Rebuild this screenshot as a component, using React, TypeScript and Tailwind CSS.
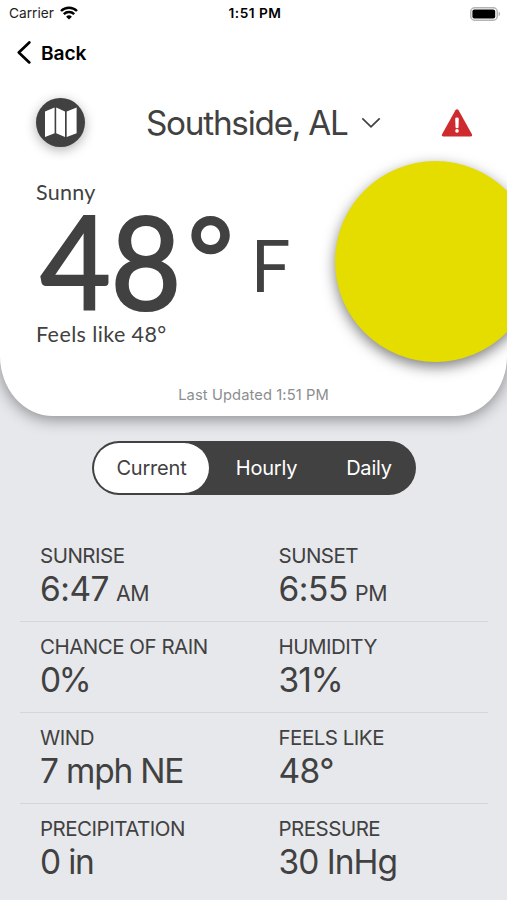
import { useState } from "react";
import type { ReactNode } from "react";

type Stat = {
  label: string;
  value: string;
  unit?: string;
  tracking: string;
};

const STATS: [Stat, Stat][] = [
  [
    { label: "SUNRISE", value: "6:47", unit: "AM", tracking: "tracking-[-0.5px]" },
    { label: "SUNSET", value: "6:55", unit: "PM", tracking: "tracking-[-0.4px]" },
  ],
  [
    { label: "CHANCE OF RAIN", value: "0%", tracking: "tracking-[-2.5px]" },
    { label: "HUMIDITY", value: "31%", tracking: "tracking-[-1px]" },
  ],
  [
    { label: "WIND", value: "7 mph NE", tracking: "tracking-[-1.2px]" },
    { label: "FEELS LIKE", value: "48°", tracking: "tracking-[-0.6px]" },
  ],
  [
    { label: "PRECIPITATION", value: "0 in", tracking: "tracking-[-1.2px]" },
    { label: "PRESSURE", value: "30 InHg", tracking: "tracking-[-1px]" },
  ],
];

const TABS = ["Current", "Hourly", "Daily"];

export default function App() {
  const [tab, setTab] = useState("Current");

  return (
    <main className="h-[900px] w-[507px] overflow-hidden bg-[#e7e8ec] font-['Inter',sans-serif] text-[#414141]">
      <section className="relative h-[416px]">
        <div className="h-full rounded-b-[53px_60px] bg-white px-px shadow-[0_3px_16px_rgba(0,0,0,0.42)]">
          <StatusBar />
          <BackButton />
          <LocationRow />
          <Temperature />
          <p className="mt-[39px] text-center text-[14.7px] leading-5 tracking-[0.1px] text-[#8b8d90]">
            Last Updated 1:51 PM
          </p>
        </div>
        {/* sun runs off the right edge */}
        <div className="absolute left-[335px] top-[161px] h-[201px] w-[201px] rounded-full bg-[#e5dc00] shadow-[0_5px_14px_rgba(0,0,0,0.5)]" />
      </section>

      <nav className="ml-[92px] mt-[25px] flex h-[54px] w-[324px] items-center rounded-full bg-[#414141] p-[2px]">
        {TABS.map((name) => (
          <TabButton key={name} active={tab === name} onClick={() => setTab(name)}>
            {name}
          </TabButton>
        ))}
      </nav>

      <div className="ml-5 mr-[19px] mt-[36px]">
        {STATS.map(([left, right]) => (
          <div
            key={left.label}
            className="grid h-[91px] grid-cols-[238.5px_1fr] border-b border-[#d5d6da] pl-5 last:border-b-0"
          >
            <StatCell {...left} />
            <StatCell {...right} />
          </div>
        ))}
      </div>
    </main>
  );
}

function StatusBar() {
  return (
    <div className="grid h-[27px] grid-cols-3 items-center pl-[8px] pr-[5px] text-[13.7px] text-[#222]">
      <div className="flex items-center gap-[6px]">
        <span>Carrier</span>
        <svg width="18" height="14" viewBox="0 0 18 14" fill="none" stroke="#000" strokeWidth="2.4">
          <path d="M1 5a11.4 11.4 0 0 1 16 0" />
          <path d="M3.8 8.1a7.4 7.4 0 0 1 10.4 0" />
          <path d="M9 13.6 6.1 10.7a4.1 4.1 0 0 1 5.8 0z" fill="#000" stroke="none" />
        </svg>
      </div>
      <span className="text-center font-semibold tracking-[0.5px] text-black">1:51 PM</span>
      <svg className="justify-self-end" width="31" height="14" viewBox="0 0 31 14">
        <rect x="0.75" y="0.75" width="26.5" height="12.5" rx="4" fill="none" stroke="#b4b4b4" strokeWidth="1.5" />
        <rect x="2.4" y="2.4" width="22.8" height="9.2" rx="2" fill="#000" />
        <path d="M28.6 4.8c2 .6 2 3.8 0 4.4z" fill="#b4b4b4" />
      </svg>
    </div>
  );
}

function BackButton() {
  return (
    <button className="flex h-[52px] items-center pl-[16px] text-black">
      <svg className="-mt-[2px]" width="14" height="23" viewBox="0 0 14 23" fill="none" stroke="#000" strokeWidth="2.7" strokeLinecap="round" strokeLinejoin="round">
        <path d="M12.3 1.4 1.8 11.4l10.5 10" />
      </svg>
      <span className="ml-[10px] text-[19.2px] font-semibold tracking-[-0.1px]">Back</span>
    </button>
  );
}

function LocationRow() {
  return (
    <div className="flex h-[88px] items-center pl-[35px]">
      <button className="-mt-px flex h-[49px] w-[49px] items-center justify-center rounded-full bg-[#414141] shadow-[0_3px_12px_rgba(0,0,0,0.3)]">
        <svg width="32" height="31" viewBox="0 0 32 31" fill="#fff">
          <path d="M0 4.4 9.6.6v25.6L0 30z" />
          <path d="m11.2.6 8.8 3.8V30l-8.8-3.8z" />
          <path d="M21.7 4.4 31.6.6v25.6L21.7 30z" />
        </svg>
      </button>
      <button className="ml-[61px] flex items-center">
        <span className="-mt-px whitespace-nowrap text-[33.3px] leading-10 tracking-[-1.25px]">Southside, AL</span>
        <svg className="ml-[14px]" width="20" height="12" viewBox="0 0 20 12" fill="none" stroke="#414141" strokeWidth="1.8">
          <path d="m.3 1.4 8.7 8.4 8.7-8.4" />
        </svg>
      </button>
      <svg className="ml-auto mr-[33px] -mt-px" width="32" height="28" viewBox="0 0 32 28">
        <path d="M14.4 1.3q1.6-2 3.2 0l13.2 23.8q.9 2.3-1.4 2.4H2.6Q.3 27.4 1.2 25.1z" fill="#cf2a2d" />
        <path d="M14.2 9.8q0-1.2 1.8-1.2t1.8 1.2l-.3 8.4q-.1 1-1.5 1t-1.5-1z" fill="#fff" />
        <circle cx="16" cy="21.9" r="1.8" fill="#fff" />
      </svg>
    </div>
  );
}

function Temperature() {
  return (
    <div className="pl-[35px] pt-[13px] font-['Lato',sans-serif]">
      <div className="h-6 text-[21.5px] leading-6 tracking-[0.3px]">Sunny</div>
      <div className="flex h-[118px] items-start whitespace-nowrap leading-[118px]">
        <span className="ml-1 -mt-[3px] origin-left scale-x-94 text-[130px] tracking-[-0.5px] [-webkit-text-stroke:2.2px_#414141]">48</span>
        <span className="-ml-[2px] -mt-[8px] text-[110px] [-webkit-text-stroke:2.6px_#414141]">°</span>
        <span className="ml-[17px] mt-[2px] text-[71px]">F</span>
      </div>
      <div className="h-6 text-[21.5px] leading-6 tracking-[0.4px]">Feels like 48°</div>
    </div>
  );
}

function TabButton({ active, onClick, children }: { active: boolean; onClick: () => void; children: ReactNode }) {
  return (
    <button
      onClick={onClick}
      className={`h-[50px] rounded-full text-[20px] tracking-[-0.2px] first:w-[115px] nth-2:w-[115px] last:w-[90px] ${
        active ? "bg-white text-[#414141]" : "text-white"
      }`}
    >
      {children}
    </button>
  );
}

function StatCell({ label, value, unit, tracking }: Stat) {
  return (
    <div className="whitespace-nowrap pt-[12px]">
      <div className="text-[20.5px] leading-[26px] tracking-[-0.5px]">{label}</div>
      <div className={`text-[33.5px] leading-10 ${tracking}`}>
        {value}
        {unit && <span className="ml-[7px] text-[21.3px]">{unit}</span>}
      </div>
    </div>
  );
}
